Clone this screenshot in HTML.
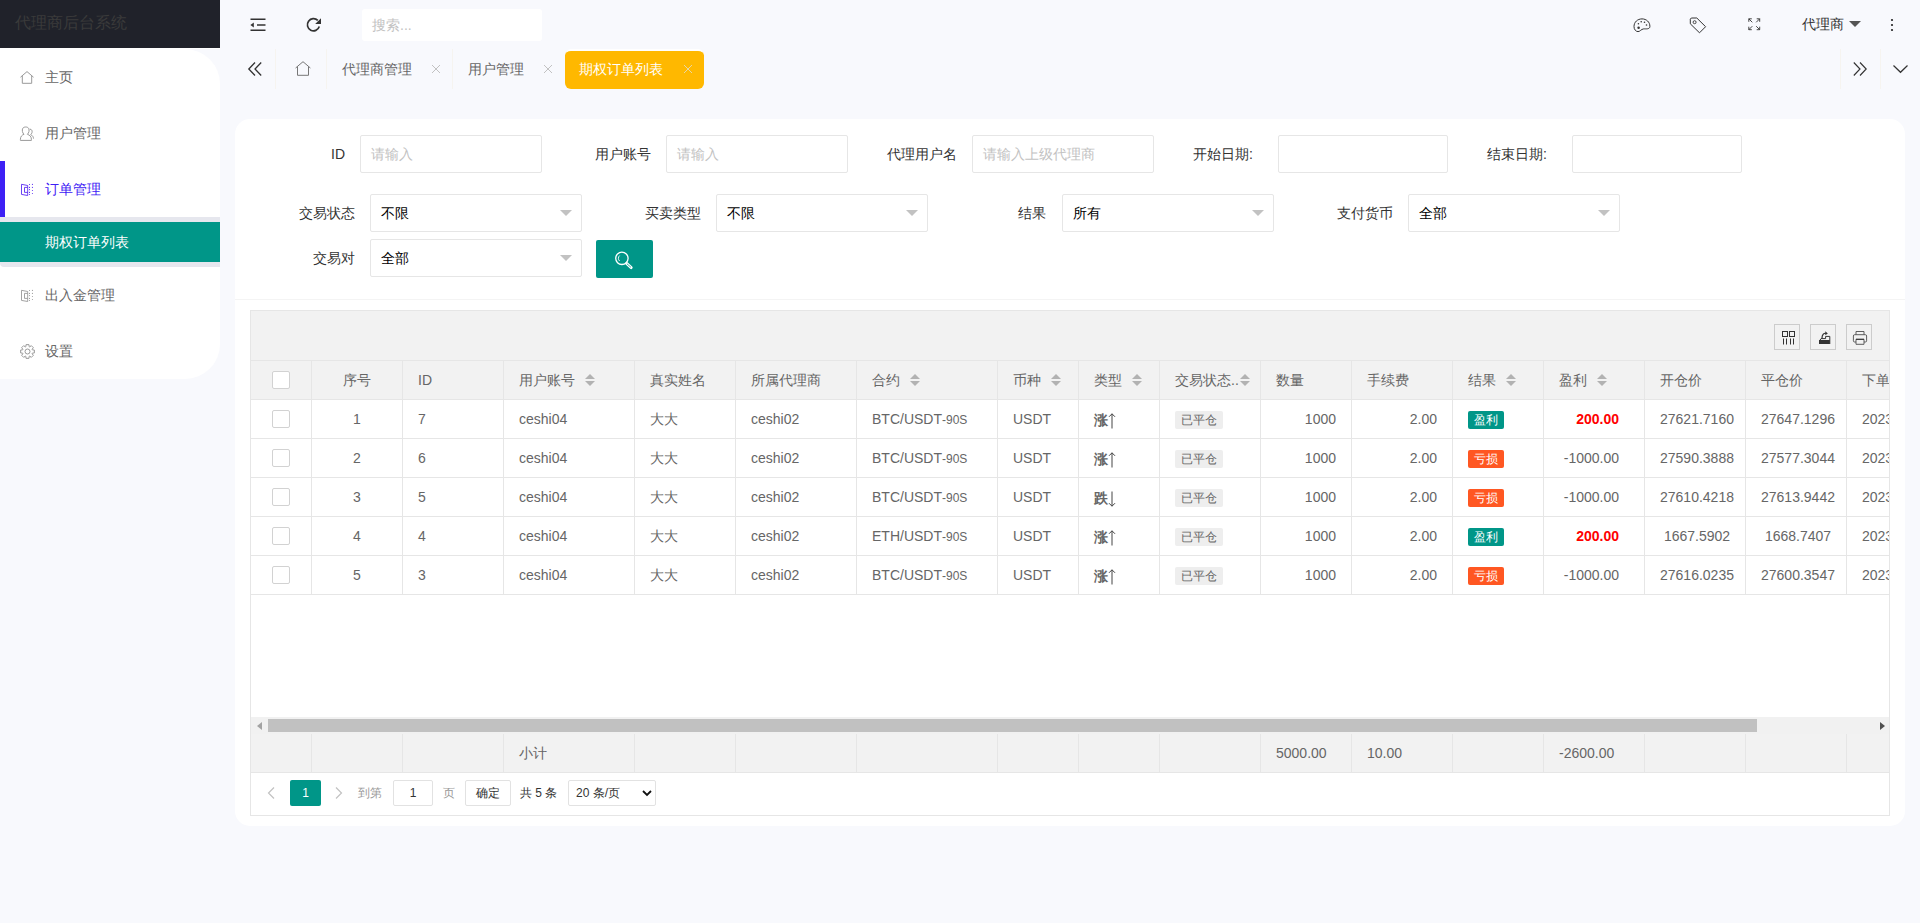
<!DOCTYPE html>
<html><head><meta charset="utf-8">
<style>
*{box-sizing:border-box;margin:0;padding:0}
html,body{width:1920px;height:923px;overflow:hidden}
body{background:#f8f9fd;font-family:"Liberation Sans",sans-serif;font-size:14px;color:#666;position:relative}
.abs{position:absolute}
svg{display:block;overflow:visible}
/* header logo */
#logo{left:0;top:0;width:220px;height:48px;background:#20222a}
#logo span{position:absolute;left:15px;top:12px;font-size:16px;line-height:22px;color:#3a3a3a;white-space:nowrap}
#logoline{left:0;top:48px;width:220px;height:1px;background:#fff}
#side{left:0;top:49px;width:220px;height:330px;background:#fff;border-radius:0 35px 35px 0}
.mi{position:absolute;left:0;width:220px;height:56px}
.mi .t{position:absolute;left:45px;top:0;line-height:56px;color:#666;white-space:nowrap}
.mi svg{position:absolute;left:20px}
/* top */
.ticon{position:absolute}
#search{left:362px;top:9px;width:180px;height:32px;background:#fff;border-radius:3px}
#search span{position:absolute;left:10px;top:0;line-height:32px;color:#c2c2c2}
.tabsep{position:absolute;top:49px;width:1px;height:40px;background:#f6f4f0}
.tab{position:absolute;top:49px;height:40px;line-height:40px;color:#666;white-space:nowrap}
.tabx{position:absolute}
/* card */
#card{left:235px;top:119px;width:1670px;height:707px;background:#fff;border-radius:15px}
#cardsep{left:235px;top:299px;width:1670px;height:1px;background:#f4f4f4}
.lbl{position:absolute;line-height:38px;color:#333;white-space:nowrap;text-align:right}
.inp{position:absolute;height:38px;border:1px solid #e6e6e6;border-radius:2px;background:#fff}
.inp span{position:absolute;left:10px;top:0;line-height:36px;color:#c2c2c2;white-space:nowrap}
.sel span{color:#000}
.sel i{position:absolute;right:9px;top:15px;width:0;height:0;border-left:6px solid transparent;border-right:6px solid transparent;border-top:6px solid #c2c2c2}
#sbtn{left:596px;top:240px;width:57px;height:38px;background:#009688;border-radius:2px}
/* table */
#tbl{left:250px;top:310px;width:1640px;height:506px;border:1px solid #e6e6e6;background:#fff;overflow:hidden}
#tool{left:0;top:0;width:1638px;height:50px;background:#f2f2f2;border-bottom:1px solid #e6e6e6}
.tb{position:absolute;top:13px;width:26px;height:26px;border:1px solid #ccc}
.tb svg{position:absolute}
#thead{left:0;top:50px;height:39px;background:#f2f2f2;border-bottom:1px solid #e6e6e6}
.row{position:absolute;left:0;height:39px;border-bottom:1px solid #e6e6e6;white-space:nowrap}
.c{position:absolute;top:0;height:38px;line-height:38px;padding:0 15px;border-right:1px solid #e6e6e6;overflow:hidden;white-space:nowrap}
.cb{position:absolute;left:21px;top:10px;width:18px;height:18px;border:1px solid #d2d2d2;border-radius:2px;background:#fff}
.sort{display:inline-block;position:relative;width:10px;height:20px;margin-left:10px;vertical-align:middle;top:-1px}
.sort:before{content:"";position:absolute;left:0;top:4px;border-left:5px solid transparent;border-right:5px solid transparent;border-bottom:5px solid #b2b2b2}
.sort:after{content:"";position:absolute;left:0;top:11px;border-left:5px solid transparent;border-right:5px solid transparent;border-top:5px solid #b2b2b2}
.badge{display:inline-block;height:18px;line-height:18px;padding:0 6px;font-size:12px;border-radius:2px;vertical-align:middle;position:relative;top:0}
.bg{background:#eee;color:#666}
.bgt{background:#009688;color:#fff}
.bgr{background:#ff5722;color:#fff}
.ud{font-weight:bold;color:#666;position:relative;top:1px}
.arr{position:absolute;left:29px;top:13px}
.red{color:#f00;font-weight:bold}
.sm{font-size:12px}
#scroll{left:0;top:406px;width:1638px;height:17px;background:#f1f1f1}
#thumb{left:17px;top:2px;width:1489px;height:13px;background:#c1c1c1}
#foot{left:0;top:423px;height:39px;background:#f2f2f2;border-bottom:1px solid #e6e6e6}
#page{left:0;top:462px;width:1638px;height:42px}
.pg{position:absolute;font-size:12px;line-height:26px;white-space:nowrap;color:#666}
</style></head><body>

<div id="logo" class="abs"><span>代理商后台系统</span></div>
<div id="logoline" class="abs"></div>
<div id="side" class="abs"></div>

<!-- sidebar menu -->
<div class="mi" style="top:49px">
  <svg style="top:22px" width="14" height="13" viewBox="0 0 14 13"><path d="M0.5 6.2 L7 0.6 L13.5 6.2 M2.3 5 V12.3 H11.7 V5" fill="none" stroke="#999" stroke-width="1"/></svg>
  <span class="t" style="top:0px">主页</span></div>
<div class="mi" style="top:105px">
  <svg style="top:15px;left:14px" width="26" height="26" viewBox="0 0 26 26"><g fill="none" stroke="#999" stroke-width="1"><path d="M10 14.3 C8.3 13 8 10 8.6 8.7 C9.2 7.4 10.4 7 11.7 7 C13 7 14.2 7.4 14.8 8.7 C15.4 10 15.1 13 13.4 14.3"/><path d="M10 14.3 C8 15 6.4 16.6 6.4 19.3 V20.4 H17.4 V19.3 C17.4 16.6 15.6 15 13.4 14.3"/><path d="M15.9 9.2 C17.7 9 18.4 10.8 18 12.6 C17.8 13.6 17.2 14.2 16.6 14.6 C18.4 15.4 19.5 16.8 19.5 18.6"/></g></svg>
  <span class="t" style="top:0px">用户管理</span></div>
<div class="abs" style="left:0;top:161px;width:5px;height:56px;background:#3d20f5"></div>
<div class="mi" style="top:161px">
  <svg style="top:22px;left:20px" width="14" height="14" viewBox="0 0 14 14"><path d="M1.5 1.3 L7.7 2.5 V12.5 L1.5 11.4 Z M7.7 4.4 H4.5 V9.4 H7.7" fill="none" stroke="#5a2df2" stroke-width="0.9"/><g fill="#5a2df2"><circle cx="9.5" cy="1.5" r="0.55"/><circle cx="9.5" cy="4.4" r="0.55"/><circle cx="9.5" cy="6.6" r="0.55"/><circle cx="9.5" cy="9.4" r="0.55"/><circle cx="9.5" cy="11.5" r="0.55"/><circle cx="12.4" cy="1.4" r="0.55"/><circle cx="12.4" cy="4.4" r="0.55"/><circle cx="12.4" cy="7.5" r="0.55"/><circle cx="12.4" cy="10.5" r="0.55"/></g></svg>
  <span class="t" style="top:0px;color:#3d20f5">订单管理</span></div>
<div class="abs" style="left:0;top:217px;width:220px;height:50px;background:#e6e7ee;border-radius:0 0 0 4px"></div>
<div class="abs" style="left:0;top:222px;width:220px;height:40px;background:#009688"></div>
<div class="abs" style="left:45px;top:222px;line-height:40px;color:#fff;white-space:nowrap">期权订单列表</div>
<div class="mi" style="top:267px">
  <svg style="top:22px;left:20px" width="14" height="14" viewBox="0 0 14 14"><path d="M1.5 1.3 L7.7 2.5 V12.5 L1.5 11.4 Z M7.7 4.4 H4.5 V9.4 H7.7" fill="none" stroke="#999" stroke-width="0.9"/><g fill="#999"><circle cx="9.5" cy="1.5" r="0.55"/><circle cx="9.5" cy="4.4" r="0.55"/><circle cx="9.5" cy="6.6" r="0.55"/><circle cx="9.5" cy="9.4" r="0.55"/><circle cx="9.5" cy="11.5" r="0.55"/><circle cx="12.4" cy="1.4" r="0.55"/><circle cx="12.4" cy="4.4" r="0.55"/><circle cx="12.4" cy="7.5" r="0.55"/><circle cx="12.4" cy="10.5" r="0.55"/></g></svg>
  <span class="t" style="top:0px">出入金管理</span></div>
<div class="mi" style="top:323px">
  <svg style="top:21px;left:19.5px" width="15" height="15" viewBox="0 0 15 15"><g fill="none" stroke="#999" stroke-width="1" stroke-linejoin="round"><path d="M5.84 2.68 L6.04 0.65 L8.96 0.65 L9.16 2.68 L9.74 2.92 L11.31 1.63 L13.37 3.69 L12.08 5.26 L12.32 5.84 L14.35 6.04 L14.35 8.96 L12.32 9.16 L12.08 9.74 L13.37 11.31 L11.31 13.37 L9.74 12.08 L9.16 12.32 L8.96 14.35 L6.04 14.35 L5.84 12.32 L5.26 12.08 L3.69 13.37 L1.63 11.31 L2.92 9.74 L2.68 9.16 L0.65 8.96 L0.65 6.04 L2.68 5.84 L2.92 5.26 L1.63 3.69 L3.69 1.63 L5.26 2.92 Z"/><circle cx="7.5" cy="7.5" r="2.5"/></g></svg>
  <span class="t" style="top:0px">设置</span></div>

<!-- top bar -->
<svg class="ticon" style="left:250px;top:18px" width="16" height="14" viewBox="0 0 16 14"><path d="M0.5 1.3 H15.5 M7 7 H15.5 M0.5 12.3 H15.5" stroke="#333" stroke-width="1.45"/><path d="M0.4 7 L3.8 4.6 V9.4 Z" fill="#333"/></svg>
<svg class="ticon" style="left:306px;top:17px" width="16" height="16" viewBox="0 0 16 16"><path d="M13.3 9.6 A6.1 6.1 0 1 1 11.8 3.4" fill="none" stroke="#333" stroke-width="1.7"/><path d="M15 1.2 V7 H9.2 Z" fill="#333"/></svg>
<div id="search" class="abs"><span>搜索...</span></div>

<svg class="ticon" style="left:1633px;top:18px" width="18" height="15" viewBox="0 0 18 15"><path d="M9 0.9 C4.6 0.9 1 4 1 8.6 C1 11.6 3 13.6 5 13.6 C7.2 13.6 8 11.2 10.6 10.9 C12.6 10.7 16.9 11.6 16.9 8.4 C16.9 4 13.4 0.9 9 0.9 Z" fill="none" stroke="#333" stroke-width="1"/><circle cx="5.6" cy="9.8" r="1.25" fill="#333"/><circle cx="5.4" cy="5.7" r="0.8" fill="#333"/><circle cx="8.2" cy="3.7" r="0.8" fill="#333"/><circle cx="11.5" cy="4.3" r="0.8" fill="#333"/><circle cx="13.5" cy="7" r="0.8" fill="#333"/></svg>
<svg class="ticon" style="left:1689px;top:17px" width="18" height="17" viewBox="0 0 18 17"><path d="M1.3 2.2 L2.3 1 H7.8 L16.6 9.7 L10.5 15.8 L1.3 6.8 Z" fill="none" stroke="#333" stroke-width="1" stroke-linejoin="round"/><circle cx="5.6" cy="5.2" r="1.5" fill="none" stroke="#333" stroke-width="0.9"/></svg>
<svg class="ticon" style="left:1748px;top:18px" width="13" height="13" viewBox="0 0 13 13"><g fill="none" stroke="#333" stroke-width="0.9"><path d="M4.3 4.3 L0.8 0.8 M0.8 3.8 V0.8 H3.8"/><path d="M8.2 4.3 L11.7 0.8 M8.7 0.8 H11.7 V3.8"/><path d="M4.3 8.2 L0.8 11.7 M0.8 8.7 V11.7 H3.8"/><path d="M8.2 8.2 L11.7 11.7 M11.7 8.7 V11.7 H8.7"/></g></svg>
<div class="abs" style="left:1802px;top:13px;line-height:22px;color:#333;white-space:nowrap">代理商</div>
<div class="abs" style="left:1849px;top:21px;width:0;height:0;border-left:6px solid transparent;border-right:6px solid transparent;border-top:6px solid #555"></div>
<svg class="ticon" style="left:1890px;top:18px" width="4" height="14" viewBox="0 0 4 14"><circle cx="2" cy="2" r="1.1" fill="#222"/><circle cx="2" cy="7" r="1.1" fill="#222"/><circle cx="2" cy="12" r="1.1" fill="#222"/></svg>

<!-- tabs -->
<svg class="ticon" style="left:248px;top:62px" width="14" height="14" viewBox="0 0 14 14"><path d="M7 0.5 L0.8 7 L7 13.5 M13.2 0.5 L7 7 L13.2 13.5" fill="none" stroke="#333" stroke-width="1.3"/></svg>
<div class="tabsep" style="left:275px"></div>
<svg class="ticon" style="left:295px;top:61px" width="16" height="15" viewBox="0 0 16 15"><path d="M0.6 7 L8 0.7 L15.4 7 M2.5 5.6 V14.3 H13.5 V5.6" fill="none" stroke="#777" stroke-width="1"/></svg>
<div class="tabsep" style="left:326px"></div>
<div class="tab" style="left:342px">代理商管理</div>
<svg class="tabx" style="left:432px;top:65px" width="8" height="8" viewBox="0 0 8 8"><path d="M0 0 L8 8 M8 0 L0 8" stroke="#c2c2c2" stroke-width="1"/></svg>
<div class="tabsep" style="left:452px"></div>
<div class="tab" style="left:468px">用户管理</div>
<svg class="tabx" style="left:544px;top:65px" width="8" height="8" viewBox="0 0 8 8"><path d="M0 0 L8 8 M8 0 L0 8" stroke="#c2c2c2" stroke-width="1"/></svg>
<div class="abs" style="left:565px;top:49px;width:139px;height:40px;background:#ffb800;border-radius:6px;border-top:2px solid #fff"></div>
<div class="tab" style="left:579px;color:#fff">期权订单列表</div>
<svg class="tabx" style="left:684px;top:65px" width="8" height="8" viewBox="0 0 8 8"><path d="M0 0 L8 8 M8 0 L0 8" stroke="#e6d7a6" stroke-width="1"/></svg>
<div class="tabsep" style="left:1840px"></div>
<svg class="ticon" style="left:1853px;top:62px" width="14" height="14" viewBox="0 0 14 14"><path d="M0.8 0.5 L7 7 L0.8 13.5 M7 0.5 L13.2 7 L7 13.5" fill="none" stroke="#333" stroke-width="1.15"/></svg>
<div class="tabsep" style="left:1880px"></div>
<svg class="ticon" style="left:1893px;top:65px" width="15" height="8" viewBox="0 0 15 8"><path d="M0.5 0.5 L7.5 7.3 L14.5 0.5" fill="none" stroke="#333" stroke-width="1.2"/></svg>

<!-- card -->
<div id="card" class="abs"></div>
<div id="cardsep" class="abs"></div>
<!-- filter form -->
<div class="lbl" style="left:331px;top:135px">ID</div>
<div class="inp" style="left:360px;top:135px;width:182px"><span>请输入</span></div>
<div class="lbl" style="left:595px;top:135px">用户账号</div>
<div class="inp" style="left:666px;top:135px;width:182px"><span>请输入</span></div>
<div class="lbl" style="left:887px;top:135px">代理用户名</div>
<div class="inp" style="left:972px;top:135px;width:182px"><span>请输入上级代理商</span></div>
<div class="lbl" style="left:1193px;top:135px">开始日期:</div>
<div class="inp" style="left:1278px;top:135px;width:170px"></div>
<div class="lbl" style="left:1487px;top:135px">结束日期:</div>
<div class="inp" style="left:1572px;top:135px;width:170px"></div>

<div class="lbl" style="left:299px;top:194px">交易状态</div>
<div class="inp sel" style="left:370px;top:194px;width:212px"><span>不限</span><i></i></div>
<div class="lbl" style="left:645px;top:194px">买卖类型</div>
<div class="inp sel" style="left:716px;top:194px;width:212px"><span>不限</span><i></i></div>
<div class="lbl" style="left:1018px;top:194px">结果</div>
<div class="inp sel" style="left:1062px;top:194px;width:212px"><span>所有</span><i></i></div>
<div class="lbl" style="left:1337px;top:194px">支付货币</div>
<div class="inp sel" style="left:1408px;top:194px;width:212px"><span>全部</span><i></i></div>

<div class="lbl" style="left:313px;top:239px">交易对</div>
<div class="inp sel" style="left:370px;top:239px;width:212px"><span>全部</span><i></i></div>
<div id="sbtn" class="abs"><svg style="position:absolute;left:0;top:0" width="57" height="38" viewBox="0 0 57 38"><circle cx="25.9" cy="18.3" r="6.2" fill="none" stroke="#fff" stroke-width="1.3"/><path d="M23.6 15.6 A3.6 3.6 0 0 0 23.6 21" fill="none" stroke="#fff" stroke-width="0.9"/><path d="M30.6 23.4 L35.2 27.6" stroke="#fff" stroke-width="2.9" stroke-linecap="round"/><path d="M31.2 24 L34.6 27" stroke="#009688" stroke-width="0.8" stroke-linecap="round"/></svg></div>

<!-- table -->
<div id="tbl" class="abs">
<div id="tool" class="abs">
  <div class="tb" style="left:1523px"><svg style="left:7px;top:6px" width="13" height="14" viewBox="0 0 13 14"><g fill="none" stroke="#333" stroke-width="1"><rect x="0.5" y="0.5" width="5" height="5"/><rect x="7.5" y="0.5" width="5" height="5"/><path d="M1.5 7.5 V13.5 M4.5 7.5 V13.5 M8.5 7.5 V13.5 M11.5 7.5 V13.5"/></g></svg></div>
  <div class="tb" style="left:1559px"><svg style="left:-1px;top:-1px" width="26" height="26" viewBox="1810 324 26 26"><rect x="1819" y="340" width="10.8" height="4" fill="#333"/><path d="M1819.8 340.5 L1821 338.6 H1825.6 V336.4 H1829.8 V344" fill="none" stroke="#333" stroke-width="1"/><path d="M1822 338.3 C1822 334.8 1823.6 333 1826 333.3" fill="none" stroke="#333" stroke-width="1.2"/><path d="M1825.3 331.3 L1827.8 333.4 L1825.3 335.3 Z" fill="#333"/></svg></div>
  <div class="tb" style="left:1595px"><svg style="left:-1px;top:-1px" width="26" height="26" viewBox="1846 324 26 26"><g fill="none" stroke="#555" stroke-width="0.95"><path d="M1856 334.7 V331.5 H1864 V334.7"/><path d="M1856 342 H1854.6 Q1853.4 342 1853.4 340.8 V336 Q1853.4 334.7 1854.6 334.7 H1865.4 Q1866.6 334.7 1866.6 336 V340.8 Q1866.6 342 1865.4 342 H1864"/><path d="M1856 339.3 H1864 V344.3 H1856 Z"/></g><path d="M1856 339.3 H1864" stroke="#333" stroke-width="1"/></svg></div>
</div>
<div id="thead" class="row" style="top:50px;width:1740px"><div class="c" style="left:0px;width:61px;"><i class="cb"></i></div><div class="c" style="left:61px;width:91px;text-align:center;">序号</div><div class="c" style="left:152px;width:101px;">ID</div><div class="c" style="left:253px;width:131px;">用户账号<i class="sort"></i></div><div class="c" style="left:384px;width:101px;">真实姓名</div><div class="c" style="left:485px;width:121px;">所属代理商</div><div class="c" style="left:606px;width:141px;">合约<i class="sort"></i></div><div class="c" style="left:747px;width:81px;">币种<i class="sort"></i></div><div class="c" style="left:828px;width:81px;">类型<i class="sort"></i></div><div class="c" style="left:909px;width:101px;">交易状态..<i class="sort" style="margin-left:1px"></i></div><div class="c" style="left:1010px;width:91px;">数量</div><div class="c" style="left:1101px;width:101px;">手续费</div><div class="c" style="left:1202px;width:91px;">结果<i class="sort"></i></div><div class="c" style="left:1293px;width:101px;">盈利<i class="sort"></i></div><div class="c" style="left:1394px;width:101px;">开仓价</div><div class="c" style="left:1495px;width:101px;">平仓价</div><div class="c" style="left:1596px;width:144px;">下单时间</div></div>
<div class="row" style="top:89px;width:1740px"><div class="c" style="left:0px;width:61px;"><i class="cb"></i></div><div class="c" style="left:61px;width:91px;text-align:center;">1</div><div class="c" style="left:152px;width:101px;">7</div><div class="c" style="left:253px;width:131px;">ceshi04</div><div class="c" style="left:384px;width:101px;">大大</div><div class="c" style="left:485px;width:121px;">ceshi02</div><div class="c" style="left:606px;width:141px;">BTC/USDT<span class="sm">-90S</span></div><div class="c" style="left:747px;width:81px;">USDT</div><div class="c" style="left:828px;width:81px;"><b class="ud">涨</b><svg class="arr" width="8" height="16" viewBox="0 0 8 16"><path d="M4 0.8 V15.5 M1 3.8 L4 0.8 L7 3.8" fill="none" stroke="#444" stroke-width="1"/></svg></div><div class="c" style="left:909px;width:101px;"><span class="badge bg">已平仓</span></div><div class="c" style="left:1010px;width:91px;text-align:right;">1000</div><div class="c" style="left:1101px;width:101px;text-align:right;">2.00</div><div class="c" style="left:1202px;width:91px;"><span class="badge bgt">盈利</span></div><div class="c" style="left:1293px;width:101px;text-align:right;padding-right:25px;"><span class="red">200.00</span></div><div class="c" style="left:1394px;width:101px;text-align:center;">27621.7160</div><div class="c" style="left:1495px;width:101px;text-align:center;">27647.1296</div><div class="c" style="left:1596px;width:144px;">2023-09-25 12:00:00</div></div>
<div class="row" style="top:128px;width:1740px"><div class="c" style="left:0px;width:61px;"><i class="cb"></i></div><div class="c" style="left:61px;width:91px;text-align:center;">2</div><div class="c" style="left:152px;width:101px;">6</div><div class="c" style="left:253px;width:131px;">ceshi04</div><div class="c" style="left:384px;width:101px;">大大</div><div class="c" style="left:485px;width:121px;">ceshi02</div><div class="c" style="left:606px;width:141px;">BTC/USDT<span class="sm">-90S</span></div><div class="c" style="left:747px;width:81px;">USDT</div><div class="c" style="left:828px;width:81px;"><b class="ud">涨</b><svg class="arr" width="8" height="16" viewBox="0 0 8 16"><path d="M4 0.8 V15.5 M1 3.8 L4 0.8 L7 3.8" fill="none" stroke="#444" stroke-width="1"/></svg></div><div class="c" style="left:909px;width:101px;"><span class="badge bg">已平仓</span></div><div class="c" style="left:1010px;width:91px;text-align:right;">1000</div><div class="c" style="left:1101px;width:101px;text-align:right;">2.00</div><div class="c" style="left:1202px;width:91px;"><span class="badge bgr">亏损</span></div><div class="c" style="left:1293px;width:101px;text-align:right;padding-right:25px;"><span class="">-1000.00</span></div><div class="c" style="left:1394px;width:101px;text-align:center;">27590.3888</div><div class="c" style="left:1495px;width:101px;text-align:center;">27577.3044</div><div class="c" style="left:1596px;width:144px;">2023-09-25 12:00:00</div></div>
<div class="row" style="top:167px;width:1740px"><div class="c" style="left:0px;width:61px;"><i class="cb"></i></div><div class="c" style="left:61px;width:91px;text-align:center;">3</div><div class="c" style="left:152px;width:101px;">5</div><div class="c" style="left:253px;width:131px;">ceshi04</div><div class="c" style="left:384px;width:101px;">大大</div><div class="c" style="left:485px;width:121px;">ceshi02</div><div class="c" style="left:606px;width:141px;">BTC/USDT<span class="sm">-90S</span></div><div class="c" style="left:747px;width:81px;">USDT</div><div class="c" style="left:828px;width:81px;"><b class="ud">跌</b><svg class="arr" width="8" height="16" viewBox="0 0 8 16"><path d="M4 0.5 V15.2 M1 12.2 L4 15.2 L7 12.2" fill="none" stroke="#444" stroke-width="1"/></svg></div><div class="c" style="left:909px;width:101px;"><span class="badge bg">已平仓</span></div><div class="c" style="left:1010px;width:91px;text-align:right;">1000</div><div class="c" style="left:1101px;width:101px;text-align:right;">2.00</div><div class="c" style="left:1202px;width:91px;"><span class="badge bgr">亏损</span></div><div class="c" style="left:1293px;width:101px;text-align:right;padding-right:25px;"><span class="">-1000.00</span></div><div class="c" style="left:1394px;width:101px;text-align:center;">27610.4218</div><div class="c" style="left:1495px;width:101px;text-align:center;">27613.9442</div><div class="c" style="left:1596px;width:144px;">2023-09-25 12:00:00</div></div>
<div class="row" style="top:206px;width:1740px"><div class="c" style="left:0px;width:61px;"><i class="cb"></i></div><div class="c" style="left:61px;width:91px;text-align:center;">4</div><div class="c" style="left:152px;width:101px;">4</div><div class="c" style="left:253px;width:131px;">ceshi04</div><div class="c" style="left:384px;width:101px;">大大</div><div class="c" style="left:485px;width:121px;">ceshi02</div><div class="c" style="left:606px;width:141px;">ETH/USDT<span class="sm">-90S</span></div><div class="c" style="left:747px;width:81px;">USDT</div><div class="c" style="left:828px;width:81px;"><b class="ud">涨</b><svg class="arr" width="8" height="16" viewBox="0 0 8 16"><path d="M4 0.8 V15.5 M1 3.8 L4 0.8 L7 3.8" fill="none" stroke="#444" stroke-width="1"/></svg></div><div class="c" style="left:909px;width:101px;"><span class="badge bg">已平仓</span></div><div class="c" style="left:1010px;width:91px;text-align:right;">1000</div><div class="c" style="left:1101px;width:101px;text-align:right;">2.00</div><div class="c" style="left:1202px;width:91px;"><span class="badge bgt">盈利</span></div><div class="c" style="left:1293px;width:101px;text-align:right;padding-right:25px;"><span class="red">200.00</span></div><div class="c" style="left:1394px;width:101px;text-align:center;padding-left:17px;padding-right:13px;">1667.5902</div><div class="c" style="left:1495px;width:101px;text-align:center;padding-left:17px;padding-right:13px;">1668.7407</div><div class="c" style="left:1596px;width:144px;">2023-09-25 12:00:00</div></div>
<div class="row" style="top:245px;width:1740px"><div class="c" style="left:0px;width:61px;"><i class="cb"></i></div><div class="c" style="left:61px;width:91px;text-align:center;">5</div><div class="c" style="left:152px;width:101px;">3</div><div class="c" style="left:253px;width:131px;">ceshi04</div><div class="c" style="left:384px;width:101px;">大大</div><div class="c" style="left:485px;width:121px;">ceshi02</div><div class="c" style="left:606px;width:141px;">BTC/USDT<span class="sm">-90S</span></div><div class="c" style="left:747px;width:81px;">USDT</div><div class="c" style="left:828px;width:81px;"><b class="ud">涨</b><svg class="arr" width="8" height="16" viewBox="0 0 8 16"><path d="M4 0.8 V15.5 M1 3.8 L4 0.8 L7 3.8" fill="none" stroke="#444" stroke-width="1"/></svg></div><div class="c" style="left:909px;width:101px;"><span class="badge bg">已平仓</span></div><div class="c" style="left:1010px;width:91px;text-align:right;">1000</div><div class="c" style="left:1101px;width:101px;text-align:right;">2.00</div><div class="c" style="left:1202px;width:91px;"><span class="badge bgr">亏损</span></div><div class="c" style="left:1293px;width:101px;text-align:right;padding-right:25px;"><span class="">-1000.00</span></div><div class="c" style="left:1394px;width:101px;text-align:center;">27616.0235</div><div class="c" style="left:1495px;width:101px;text-align:center;">27600.3547</div><div class="c" style="left:1596px;width:144px;">2023-09-25 12:00:00</div></div>
<div id="foot" class="row" style="width:1740px"><div class="c" style="left:0px;width:61px;"></div><div class="c" style="left:61px;width:91px;"></div><div class="c" style="left:152px;width:101px;"></div><div class="c" style="left:253px;width:131px;">小计</div><div class="c" style="left:384px;width:101px;"></div><div class="c" style="left:485px;width:121px;"></div><div class="c" style="left:606px;width:141px;"></div><div class="c" style="left:747px;width:81px;"></div><div class="c" style="left:828px;width:81px;"></div><div class="c" style="left:909px;width:101px;"></div><div class="c" style="left:1010px;width:91px;">5000.00</div><div class="c" style="left:1101px;width:101px;">10.00</div><div class="c" style="left:1202px;width:91px;"></div><div class="c" style="left:1293px;width:101px;">-2600.00</div><div class="c" style="left:1394px;width:101px;"></div><div class="c" style="left:1495px;width:101px;"></div><div class="c" style="left:1596px;width:144px;"></div></div>
<div id="scroll" class="abs"><div id="thumb" class="abs"></div>
  <div class="abs" style="left:6px;top:5px;width:0;height:0;border-top:4px solid transparent;border-bottom:4px solid transparent;border-right:5px solid #a3a3a3"></div>
  <div class="abs" style="left:1629px;top:5px;width:0;height:0;border-top:4px solid transparent;border-bottom:4px solid transparent;border-left:5px solid #505050"></div>
</div>
<div id="page" class="abs">
  <svg class="abs" style="left:16px;top:14px" width="8" height="12" viewBox="0 0 8 12"><path d="M7 0.5 L1.5 6 L7 11.5" fill="none" stroke="#c2c2c2" stroke-width="1.2"/></svg>
  <div class="abs" style="left:39px;top:7px;width:31px;height:26px;background:#009688;border-radius:2px;color:#fff;font-size:12px;line-height:26px;text-align:center">1</div>
  <svg class="abs" style="left:84px;top:14px" width="8" height="12" viewBox="0 0 8 12"><path d="M1 0.5 L6.5 6 L1 11.5" fill="none" stroke="#c2c2c2" stroke-width="1.2"/></svg>
  <div class="pg" style="left:107px;top:7px;color:#999">到第</div>
  <div class="abs" style="left:142px;top:7px;width:40px;height:26px;border:1px solid #e2e2e2;border-radius:2px;font-size:12px;line-height:24px;text-align:center;color:#333">1</div>
  <div class="pg" style="left:192px;top:7px;color:#999">页</div>
  <div class="abs" style="left:214px;top:7px;width:46px;height:26px;border:1px solid #e2e2e2;border-radius:2px;font-size:12px;line-height:24px;text-align:center;color:#333">确定</div>
  <div class="pg" style="left:269px;top:7px;color:#333">共 5 条</div>
  <div class="abs" style="left:317px;top:7px;width:88px;height:26px;border:1px solid #e2e2e2;border-radius:2px;font-size:12px;line-height:24px;color:#333;padding-left:7px">20 条/页
    <svg class="abs" style="left:73px;top:9px" width="10" height="7" viewBox="0 0 10 7"><path d="M1 1 L5 5 L9 1" fill="none" stroke="#111" stroke-width="1.8"/></svg></div>
</div>
</div>

</body></html>
